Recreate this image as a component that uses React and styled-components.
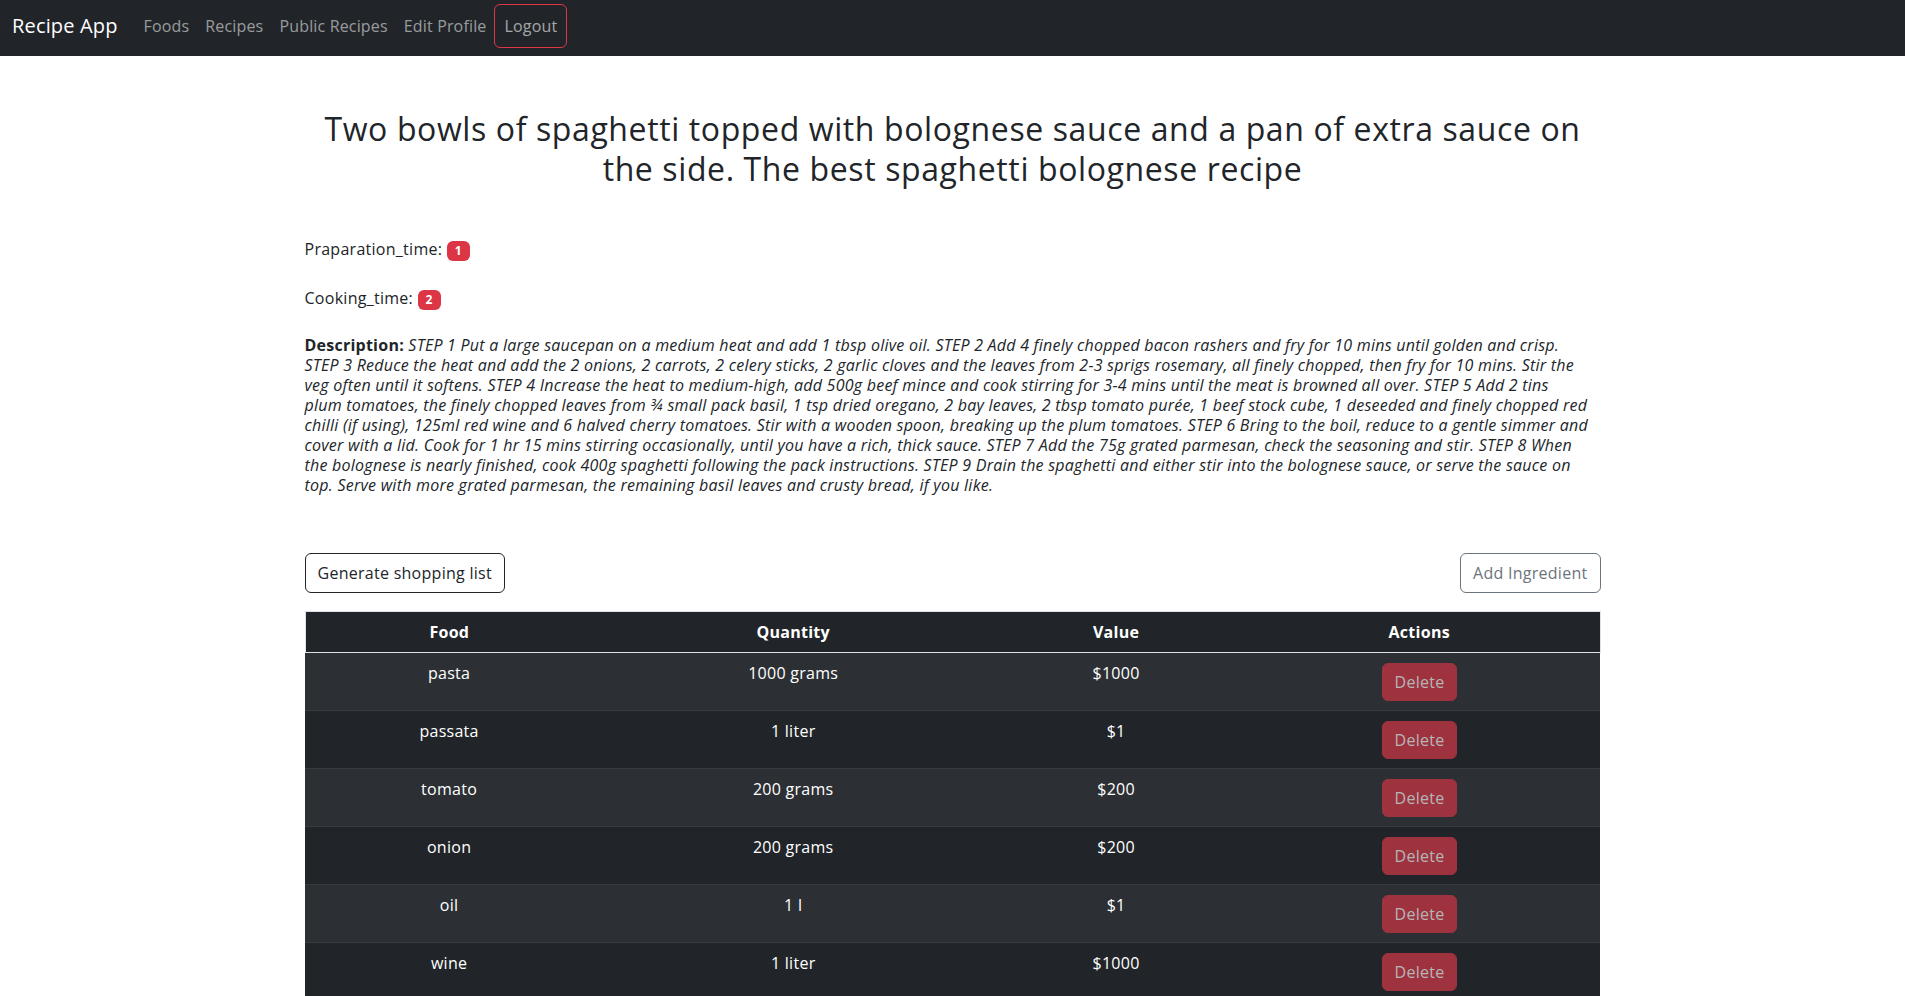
import React from 'react'
import styled, { createGlobalStyle } from 'styled-components';

const GlobalStyle = createGlobalStyle`
  body {
    margin: 0;
    font-family: "Open Sans", "Liberation Sans", sans-serif;
    font-size: 16px;
    line-height: 1.5;
    letter-spacing: 0.017em;
    color: #212529;
    background: #fff;
  }
`;

const ingredients = [
  { food: 'pasta', quantity: '1000 grams', value: '$1000' },
  { food: 'passata', quantity: '1 liter', value: '$1' },
  { food: 'tomato', quantity: '200 grams', value: '$200' },
  { food: 'onion', quantity: '200 grams', value: '$200' },
  { food: 'oil', quantity: '1 l', value: '$1' },
  { food: 'wine', quantity: '1 liter', value: '$1000' },
];

const titleLines = [
  'Two bowls of spaghetti topped with bolognese sauce and a pan of extra sauce on',
  'the side. The best spaghetti bolognese recipe',
];

// broken where the original page wraps it
const descriptionLines = [
  'STEP 1 Put a large saucepan on a medium heat and add 1 tbsp olive oil. STEP 2 Add 4 finely chopped bacon rashers and fry for 10 mins until golden and crisp.',
  'STEP 3 Reduce the heat and add the 2 onions, 2 carrots, 2 celery sticks, 2 garlic cloves and the leaves from 2-3 sprigs rosemary, all finely chopped, then fry for 10 mins. Stir the',
  'veg often until it softens. STEP 4 Increase the heat to medium-high, add 500g beef mince and cook stirring for 3-4 mins until the meat is browned all over. STEP 5 Add 2 tins',
  'plum tomatoes, the finely chopped leaves from ¾ small pack basil, 1 tsp dried oregano, 2 bay leaves, 2 tbsp tomato purée, 1 beef stock cube, 1 deseeded and finely chopped red',
  'chilli (if using), 125ml red wine and 6 halved cherry tomatoes. Stir with a wooden spoon, breaking up the plum tomatoes. STEP 6 Bring to the boil, reduce to a gentle simmer and',
  'cover with a lid. Cook for 1 hr 15 mins stirring occasionally, until you have a rich, thick sauce. STEP 7 Add the 75g grated parmesan, check the seasoning and stir. STEP 8 When',
  'the bolognese is nearly finished, cook 400g spaghetti following the pack instructions. STEP 9 Drain the spaghetti and either stir into the bolognese sauce, or serve the sauce on',
  'top. Serve with more grated parmesan, the remaining basil leaves and crusty bread, if you like.',
];

const withBreaks = (lines) =>
  lines.map((line, i) => (
    <React.Fragment key={i}>
      {i > 0 && <br />}
      {line}
    </React.Fragment>
  ));

const RecipeDetail = () => {
  return (
    <>
      <GlobalStyle />
      <Navbar>
        <Brand>Recipe App</Brand>
        <NavLink>Foods</NavLink>
        <NavLink>Recipes</NavLink>
        <NavLink>Public Recipes</NavLink>
        <NavLink>Edit Profile</NavLink>
        <LogoutButton>Logout</LogoutButton>
      </Navbar>

      <Main>
        <Title>{withBreaks(titleLines)}</Title>

        <InfoLine>Praparation_time: <Badge>1</Badge></InfoLine>
        <InfoLine>Cooking_time: <Badge>2</Badge></InfoLine>

        <Description>
          <strong>Description:</strong> <em>{withBreaks(descriptionLines)}</em>
        </Description>

        <Toolbar>
          <OutlineButton $variant="dark">Generate shopping list</OutlineButton>
          <OutlineButton $variant="secondary">Add Ingredient</OutlineButton>
        </Toolbar>

        <Table>
          <thead>
            <HeadRow>
              <HeadCell $width="22.1%">Food</HeadCell>
              <HeadCell $width="31.2%">Quantity</HeadCell>
              <HeadCell $width="18.7%">Value</HeadCell>
              <HeadCell $width="28%">Actions</HeadCell>
            </HeadRow>
          </thead>
          <tbody>
            {ingredients.map((item, i) => (
              <Row key={item.food} $striped={i % 2 === 0}>
                <Cell>{item.food}</Cell>
                <Cell>{item.quantity}</Cell>
                <Cell>{item.value}</Cell>
                <Cell>
                  <DeleteButton disabled>Delete</DeleteButton>
                </Cell>
              </Row>
            ))}
          </tbody>
        </Table>
      </Main>
    </>
  )
};

const Navbar = styled.nav`
  display: flex;
  align-items: center;
  height: 56px;
  box-sizing: border-box;
  padding: 4px 12px 8px;
  background: #212529;
  letter-spacing: 0.01em;
`;

const Brand = styled.a`
  font-size: 20px;
  line-height: 30px;
  color: #fff;
  margin-right: 18px;
  cursor: pointer;
`;

const NavLink = styled.a`
  padding: 0 8px;
  font-size: 16px;
  line-height: 24px;
  color: rgba(255, 255, 255, 0.55);
  cursor: pointer;
`;

const LogoutButton = styled.button`
  font-family: inherit;
  font-size: 16px;
  letter-spacing: inherit;
  line-height: 24px;
  height: 44px;
  padding: 9px;
  background: transparent;
  color: rgba(255, 255, 255, 0.6);
  border: 1px solid #dc3545;
  border-radius: 6px;
`;

const Main = styled.main`
  max-width: 1296px;
  margin: 0 auto;
  padding-top: 53px;
`;

const Title = styled.h2`
  margin: 0 0 48px;
  font-size: 32px;
  font-weight: 500;
  line-height: 40px;
  letter-spacing: 0.019em;
  text-align: center;
`;

const InfoLine = styled.p`
  margin: 0 0 25px;
  line-height: 24px;
`;

const Badge = styled.span`
  display: inline-block;
  padding: 4px 8px;
  font-size: 12px;
  font-weight: 700;
  line-height: 1;
  color: #fff;
  background: #dc3545;
  border-radius: 6px;
`;

const Description = styled.p`
  margin: 0;
  line-height: 20px;
  letter-spacing: 0.015em;
  white-space: nowrap;

  strong {
    font-weight: 700;
  }
`;

const Toolbar = styled.div`
  display: flex;
  justify-content: space-between;
  margin: 58px 0 18px;
`;

const OutlineButton = styled.button`
  font-family: inherit;
  font-size: 16px;
  letter-spacing: inherit;
  line-height: 24px;
  padding: 7px 12px;
  background: transparent;
  border-radius: 6px;
  color: ${({ $variant }) => ($variant === 'dark' ? '#212529' : '#6c757d')};
  border: 1px solid ${({ $variant }) => ($variant === 'dark' ? '#212529' : '#6c757d')};
`;

const Table = styled.table`
  width: 100%;
  border-collapse: collapse;
  table-layout: fixed;
  color: #fff;
`;

const HeadRow = styled.tr`
  border: 1px solid #dee2e6;
`;

const HeadCell = styled.th`
  width: ${({ $width }) => $width};
  padding: 8px;
  line-height: 24px;
  font-weight: 700;
  background: #212529;
  text-align: center;
`;

const Row = styled.tr`
  background: ${({ $striped }) => ($striped ? '#2c3034' : '#212529')};
  border-bottom: 1px solid #373b3e;
`;

const Cell = styled.td`
  padding: 8px;
  line-height: 24px;
  text-align: center;
  vertical-align: top;
`;

const DeleteButton = styled.button`
  display: inline-block;
  vertical-align: top;
  font-family: inherit;
  font-size: 16px;
  letter-spacing: inherit;
  line-height: 24px;
  margin: 2px 0 1px;
  padding: 6px 12px;
  color: #b5b6b7;
  background: #9e333f;
  border: 1px solid #9e333f;
  border-radius: 6px;
`;

export default RecipeDetail;
